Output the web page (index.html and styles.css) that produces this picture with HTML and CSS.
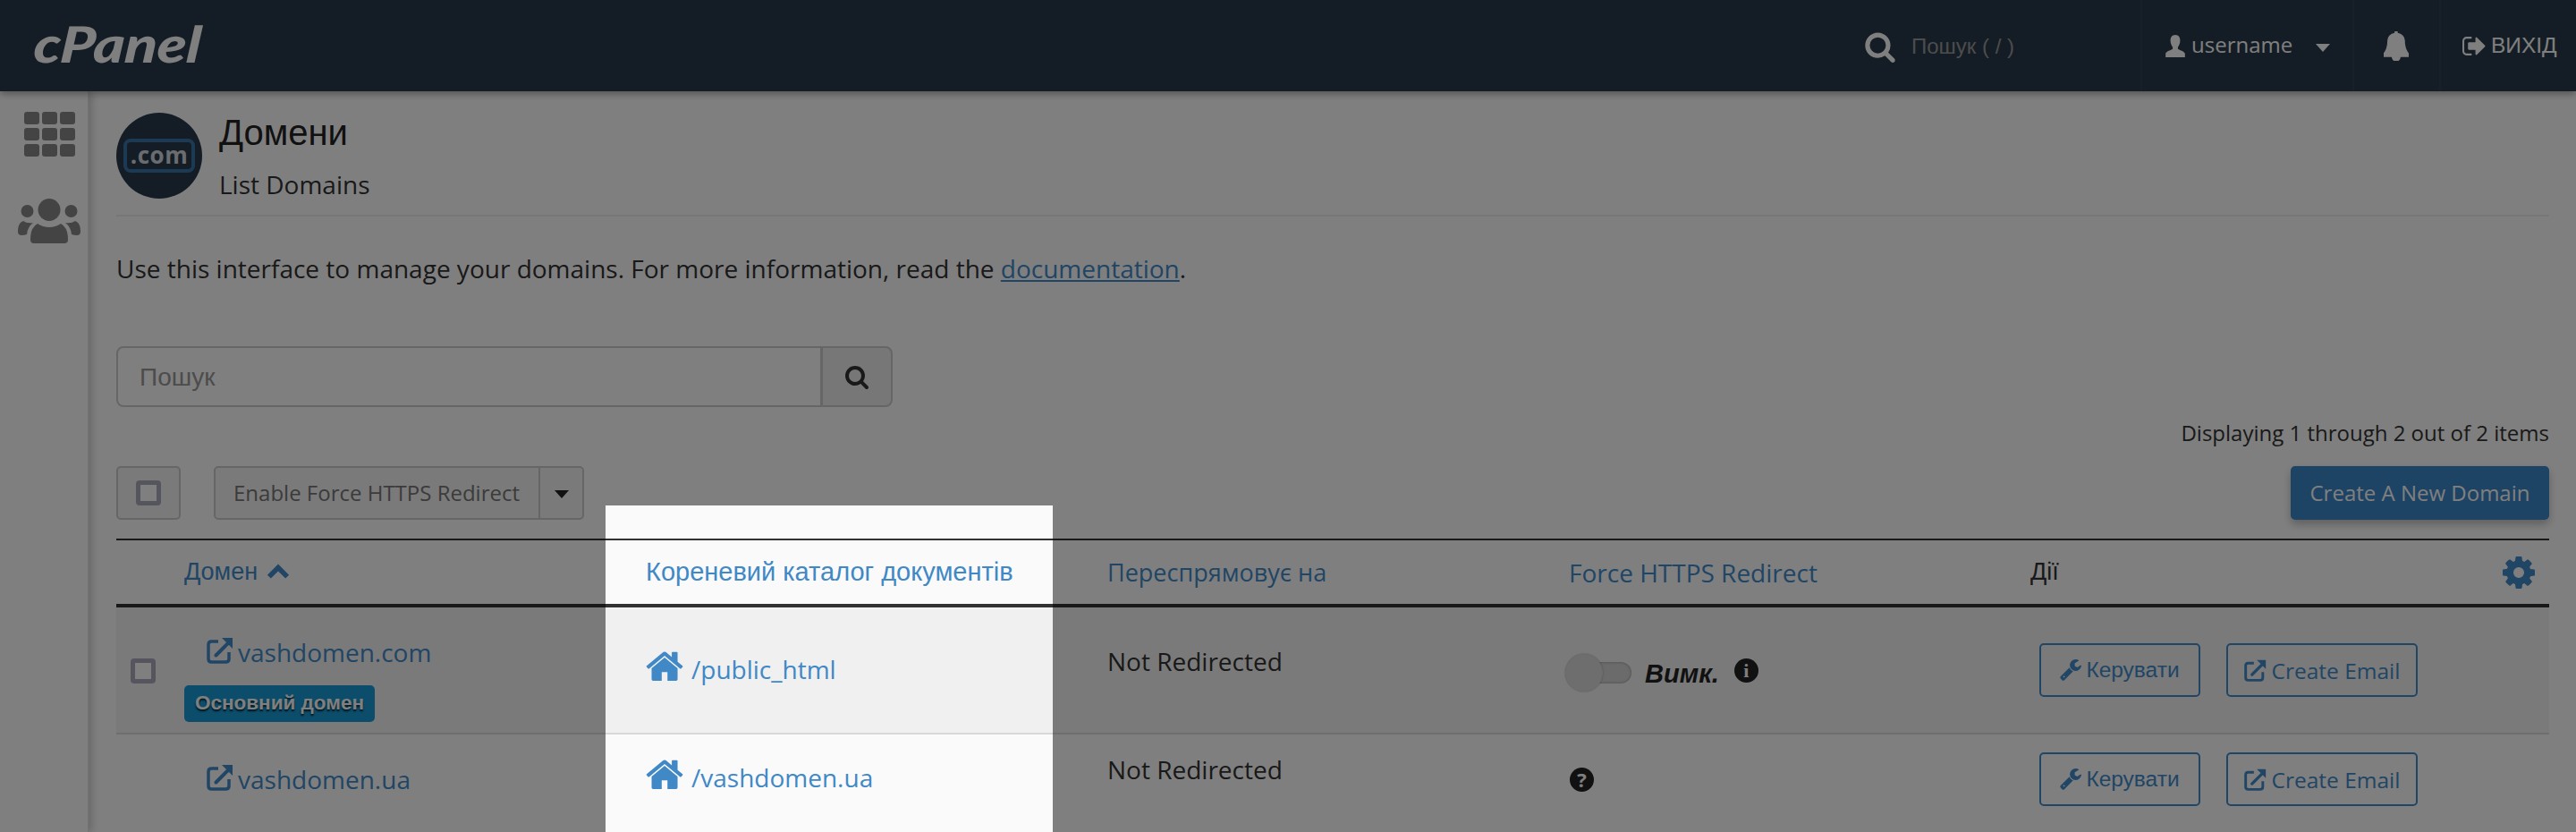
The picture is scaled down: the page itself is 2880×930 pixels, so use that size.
FILE: index.html
```html
<!DOCTYPE html>
<html lang="uk">
<head>
<meta charset="utf-8">
<title>Домени</title>
<link rel="stylesheet" href="styles.css">
</head>
<body>
<svg class="defs" width="0" height="0" aria-hidden="true">
  <symbol id="i-search" viewBox="0 0 1792 1792"><path d="M1216 832q0-185-131.500-316.500t-316.500-131.500-316.500 131.500-131.500 316.500 131.500 316.500 316.500 131.500 316.500-131.500 131.500-316.500zm512 832q0 52-38 90t-90 38q-54 0-90-38l-343-342q-179 124-399 124-143 0-273.500-55.500t-225-150-150-225-55.500-273.500 55.500-273.500 150-225 225-150 273.500-55.500 273.500 55.500 225 150 150 225 55.500 273.500q0 220-124 399l343 343q37 37 37 90z"/></symbol>
  <symbol id="i-bell" viewBox="200 40 1400 1720"><path d="M1728 1408q0 52-38 90t-90 38h-448q0 106-75 181t-181 75-181-75-75-181h-448q-52 0-90-38t-38-90q50-42 91-88t85-119.500 74.500-158.500 50-206 19.500-260q0-152 117-282.500t307-158.500q-8-19-8-39 0-40 28-68t68-28 68 28 28 68q0 20-8 39 190 28 307 158.500t117 282.500q0 139 19.500 260t50 206 74.500 158.500 85 119.500 91 88z"/></symbol>
  <symbol id="i-out" viewBox="64 256 1600 1280"><path d="M704 1440q0 4 1 20t.5 26.500-3 23.500-10 19.500-20.500 6.500h-320q-119 0-203.500-84.500t-84.500-203.500v-704q0-119 84.500-203.500t203.500-84.500h320q13 0 22.500 9.500t9.500 22.500q0 4 1 20t.5 26.500-3 23.500-10 19.500-20.500 6.500h-320q-66 0-113 47t-47 113v704q0 66 47 113t113 47h312l11.500 1 11.500 3 8 5.500 7 9 2 13.500zm928-544q0 26-19 45l-544 544q-19 19-45 19t-45-19-19-45v-288h-448q-26 0-45-19t-19-45v-384q0-26 19-45t45-19h448v-288q0-26 19-45t45-19 45 19l544 544q19 19 19 45z"/></symbol>
  <symbol id="i-users" viewBox="0 0 70 50">
    <circle cx="35" cy="12.500" r="12.500"/>
    <circle cx="10.500" cy="14" r="7"/>
    <circle cx="59.500" cy="14" r="7"/>
    <path d="M14 46Q14 32 22 28Q28 32 35 32Q42 32 48 28Q56 32 56 46Q56 50 52 50H18Q14 50 14 46z"/>
    <path d="M0 37Q0 27 6 25Q10 28 17 27Q11 31 10 40Q0 43 0 37z"/>
    <path d="M70 37Q70 27 64 25Q60 28 53 27Q59 31 60 40Q70 43 70 37z"/>
  </symbol>
  <symbol id="i-ext" viewBox="0 0 30 30">
    <path class="ext-box" d="M13 5H5.500Q2 5 2 8.500V24.500Q2 28 5.500 28H21.500Q25 28 25 24.500V17"/>
    <path class="ext-arrow" d="M10.500 20.500L24 7"/>
    <polygon points="17,1 29,1 29,13"/>
  </symbol>
  <symbol id="i-home" viewBox="90 190 1610 1350"><path d="M1472 992v480q0 26-19 45t-45 19h-384v-384h-256v384h-384q-26 0-45-19t-19-45v-480q0-1 .5-3t.5-3l575-474 575 474q1 2 1 6zm223-69l-62 74q-8 9-21 11h-3q-13 0-21-7l-692-577-692 577q-12 8-24 7-13-2-21-11l-62-74q-8-10-7-23.500t11-21.500l719-599q32-26 76-26t76 26l244 204v-195q0-14 9-23t23-9h192q14 0 23 9t9 23v408l219 182q10 8 11 21.500t-7 23.500z"/></symbol>
  <symbol id="i-wrench" viewBox="64 128 1664 1664"><path d="M448 1472q0-26-19-45t-45-19-45 19-19 45 19 45 45 19 45-19 19-45zm644-420l-682 682q-37 37-90 37-52 0-91-37l-106-108q-38-36-38-90 0-53 38-91l681-681q39 98 114.500 173.500t173.500 114.500zm634-435q0 39-23 106-47 134-164.500 217.500t-258.500 83.500q-185 0-316.500-131.500t-131.500-316.500 131.500-316.500 316.500-131.500q58 0 121.500 16.500t107.500 46.500q16 11 16 28t-16 28l-293 169v224l193 107q5-3 79-48.500t135.500-81 70.500-35.500q15 0 23.500 10t8.500 25z"/></symbol>
  <symbol id="i-cog" viewBox="128 128 1536 1536"><path d="M1152 896q0-106-75-181t-181-75-181 75-75 181 75 181 181 75 181-75 75-181zm512-109v222q0 12-8 23t-20 13l-185 28q-19 54-39 91 35 50 107 138 10 12 10 25t-9 23q-27 37-99 108t-94 71q-12 0-26-9l-138-108q-44 23-91 38-16 136-29 186-7 28-36 28h-222q-14 0-24.500-8.500t-11.500-21.500l-28-184q-49-16-90-37l-141 107q-10 9-25 9-14 0-25-11-126-114-165-168-7-10-7-23 0-12 8-23 15-21 51-66.500t54-70.500q-27-50-41-99l-183-27q-13-2-21-12.500t-8-23.500v-222q0-12 8-23t19-13l186-28q14-46 39-92-40-57-107-138-10-12-10-24 0-10 9-23 26-36 98.500-107.500t94.500-71.500q13 0 26 10l138 107q44-23 91-38 16-136 29-186 7-28 36-28h222q14 0 24.500 8.500t11.500 21.500l28 184q49 16 90 37l142-107q9-9 24-9 13 0 25 10 129 119 165 170 7 8 7 22 0 12-8 23-15 21-51 66.500t-54 70.500q26 50 41 98l183 28q13 2 21 12.500t8 23.500z"/></symbol>
</svg>

<header class="topbar">
  <span class="logo">cPanel</span>
  <div class="top-search">
    <svg class="ic ic-topsearch"><use href="#i-search"/></svg>
    <span class="top-placeholder">Пошук ( / )</span>
  </div>
  <div class="top-cell top-user">
    <svg class="ic ic-user" viewBox="0 0 26 30"><path d="M13 0c4.500 0 6.500 3.500 6.500 7.500 0 3.500-1.500 7-3 9v2.500c3 1.800 9.500 3.500 9.500 6.500V30H0v-4.500c0-3 6.500-4.700 9.500-6.500v-2.500c-1.500-2-3-5.500-3-9C6.500 3.500 8.500 0 13 0z"/></svg>
    <span class="top-name">username</span>
    <svg class="ic ic-topcaret" viewBox="0 0 16 9"><polygon points="0,0 16,0 8,9"/></svg>
  </div>
  <div class="top-cell top-bell"><svg class="ic ic-bell"><use href="#i-bell"/></svg></div>
  <div class="top-cell top-logout">
    <svg class="ic ic-out"><use href="#i-out"/></svg>
    <span class="top-exit">ВИХІД</span>
  </div>
</header>

<div class="shell">
  <nav class="rail">
    <div class="grid-icon">
      <i></i><i></i><i></i><i></i><i></i><i></i><i></i><i></i><i></i>
    </div>
    <svg class="ic ic-users"><use href="#i-users"/></svg>
  </nav>

  <main class="content">
    <section class="page-head">
      <div class="app-icon"><span class="app-icon-box">.com</span></div>
      <div class="page-titles">
        <h1 class="page-title">Домени</h1>
        <p class="page-sub">List Domains</p>
      </div>
    </section>

    <p class="intro">Use this interface to manage your domains. For more information, read the <a class="doc-link" href="#">documentation</a>.</p>

    <div class="search-group">
      <div class="search-input">Пошук</div>
      <div class="search-btn"><svg class="ic ic-btnsearch"><use href="#i-search"/></svg></div>
    </div>

    <div class="paging">Displaying 1 through 2 out of 2 items</div>

    <div class="toolbar">
      <div class="toolbar-left">
        <div class="check-btn"><span class="checkbox"></span></div>
        <div class="split">
          <span class="split-label">Enable Force HTTPS Redirect</span>
          <span class="split-caret"><svg class="ic ic-caret" viewBox="0 0 16 9"><polygon points="0,0 16,0 8,9"/></svg></span>
        </div>
      </div>
      <div class="primary-btn">Create A New Domain</div>
    </div>

    <table class="domains">
      <colgroup>
        <col class="c-check"><col class="c-std"><col class="c-std"><col class="c-std"><col class="c-std"><col class="c-act">
      </colgroup>
      <thead>
        <tr>
          <th class="th-check"></th>
          <th class="th-link cy">Домен <svg class="ic ic-chev" viewBox="0 0 24 16"><polyline points="3,13 12,4 21,13"/></svg></th>
          <th class="th-link2 cy">Кореневий каталог документів</th>
          <th class="th-link os">Переспрямовує на</th>
          <th class="th-link th-force os">Force HTTPS Redirect</th>
          <th class="th-plain">
            <div class="th-act"><span class="cy">Дії</span><svg class="ic ic-cog"><use href="#i-cog"/></svg></div>
          </th>
        </tr>
      </thead>
      <tbody>
        <tr class="row-a">
          <td class="td-check"><span class="checkbox"></span></td>
          <td class="td-domain">
            <a class="domain-link" href="#"><svg class="ic ic-ext"><use href="#i-ext"/></svg>vashdomen.com</a>
            <span class="badge">Основний домен</span>
          </td>
          <td class="td-root"><a class="root-link" href="#"><svg class="ic ic-home"><use href="#i-home"/></svg>/public_html</a></td>
          <td class="td-top">Not Redirected</td>
          <td class="td-force">
            <span class="toggle"><span class="toggle-track"></span><span class="toggle-knob"></span></span>
            <span class="off-label">Вимк.</span>
            <span class="round-badge round-i">i</span>
          </td>
          <td class="td-actions">
            <a class="outline-btn btn-manage" href="#"><svg class="ic ic-wrench"><use href="#i-wrench"/></svg>Керувати</a>
            <a class="outline-btn btn-mail" href="#"><svg class="ic ic-ext-sm"><use href="#i-ext"/></svg>Create Email</a>
          </td>
        </tr>
        <tr class="row-b">
          <td></td>
          <td class="td-domain td-domain-b">
            <a class="domain-link" href="#"><svg class="ic ic-ext"><use href="#i-ext"/></svg>vashdomen.ua</a>
          </td>
          <td class="td-root td-root-b"><a class="root-link" href="#"><svg class="ic ic-home"><use href="#i-home"/></svg>/vashdomen.ua</a></td>
          <td class="td-top">Not Redirected</td>
          <td class="td-force td-force-b"><span class="round-badge round-q">?</span></td>
          <td class="td-actions td-actions-b">
            <a class="outline-btn btn-manage" href="#"><svg class="ic ic-wrench"><use href="#i-wrench"/></svg>Керувати</a>
            <a class="outline-btn btn-mail" href="#"><svg class="ic ic-ext-sm"><use href="#i-ext"/></svg>Create Email</a>
          </td>
        </tr>
      </tbody>
    </table>
  </main>
</div>

<div class="spotlight"></div>
</body>
</html>
```

FILE: styles.css
```css
* { box-sizing: border-box; }
html, body { margin: 0; height: 930px; overflow: hidden; background: #fff; }
body { font-family: "Open Sans", sans-serif; font-size: 27px; color: #333; position: relative; }
a { text-decoration: none; }
.defs { position: absolute; }
.ic { fill: currentColor; display: inline-block; }
.cy { font-family: "Liberation Sans", sans-serif; }
.os { font-family: "Open Sans", sans-serif; }
.ext-box { fill: none; stroke: currentColor; stroke-width: 3.5; }
.ext-arrow { fill: none; stroke: currentColor; stroke-width: 4; stroke-linecap: round; }

/* top bar */
.topbar { height: 102px; background: #293a4a; display: flex; align-items: stretch; color: #fff; position: relative; z-index: 2; box-shadow: 0 3px 8px rgba(0,0,0,.35); }
.logo { font-family: "Lato", sans-serif; font-weight: 900; font-style: italic; font-size: 56px; line-height: 98px; margin-left: 38px; margin-right: auto; transform: scaleX(1.19) skewX(-4deg); transform-origin: left center; }
.top-search { display: flex; align-items: center; width: 309px; padding-top: 2px; }
.ic-topsearch { width: 36px; height: 36px; margin-right: 17px; }
.top-placeholder { font-family: "Liberation Sans", sans-serif; font-size: 24px; color: #999; }
.top-cell { display: flex; align-items: center; border-left: 2px solid #2f4152; }
.top-user { width: 237px; padding-left: 25px; }
.ic-user { width: 24px; height: 25px; margin-right: 6px; }
.top-name { font-size: 24px; width: 139px; line-height: 28px; margin-bottom: 2px; }
.ic-topcaret { width: 16px; height: 9px; margin-top: 4px; }
.top-bell { width: 97px; justify-content: center; }
.ic-bell { width: 28px; height: 33px; margin-right: 2px; }
.top-logout { flex: 0 0 153px; padding-left: 24px; }
.ic-out { width: 26px; height: 21px; margin-right: 6px; }
.top-exit { font-family: "Liberation Sans", sans-serif; font-size: 24.5px; }

/* shell */
.shell { display: flex; height: 828px; }
.rail { width: 99px; flex: none; display: flex; flex-direction: column; align-items: center; color: #888; padding: 23px 0 0 12px; box-shadow: 4px 0 8px rgba(0,0,0,.18); border-right: 1px solid #e6e6e6; position: relative; z-index: 1; }
.grid-icon { display: grid; grid-template-columns: repeat(3, 17px); grid-auto-rows: 14px; gap: 4px 3px; width: 57px; margin-bottom: 47px; }
.grid-icon i { background: #888; border-radius: 3px; }
.ic-users { width: 70px; height: 50px; }
.content { flex: 1; padding: 24px 30px 0 31px; min-width: 0; }

/* page head */
.page-head { display: flex; gap: 19px; height: 116px; border-bottom: 2px solid #eee; }
.app-icon { width: 96px; height: 96px; border-radius: 50%; background: #293a4a; display: flex; align-items: center; justify-content: center; }
.app-icon-box { border: 4px solid #3a75a8; border-radius: 8px; color: #d5dbe0; font-size: 26px; font-weight: 700; letter-spacing: .5px; line-height: 28px; height: 38px; width: 80px; text-align: center; white-space: nowrap; }
.page-title { font-family: "Liberation Sans", sans-serif; font-weight: 400; font-size: 40px; line-height: 44px; margin: 0; color: #222; }
.page-sub { font-size: 28px; line-height: 36px; margin: 18px 0 0; }
.intro { margin: 39px 0 0; line-height: 38px; font-size: 28px; }
.doc-link { color: #428bca; text-decoration: underline; }

/* search */
.search-group { display: flex; width: 868px; height: 68px; margin-top: 68px; }
.search-input { flex: 1; border: 2px solid #ccc; border-radius: 8px 0 0 8px; font-family: "Liberation Sans", sans-serif; font-size: 28px; color: #999; padding-left: 24px; line-height: 65px; }
.search-btn { width: 79px; border: 2px solid #ccc; border-left-width: 1px; border-radius: 0 8px 8px 0; background: #eee; display: flex; align-items: center; justify-content: center; color: #333; }
.ic-btnsearch { width: 28px; height: 28px; }
.paging { font-size: 24px; text-align: right; line-height: 30px; margin-top: 14px; }

/* toolbar */
.toolbar { display: flex; justify-content: space-between; margin-top: 22px; height: 60px; }
.toolbar-left { display: flex; gap: 37px; }
.check-btn { width: 72px; border: 2px solid #ccc; border-radius: 5px; background: #f5f5f5; display: flex; align-items: center; justify-content: center; }
.checkbox { display: block; width: 28px; height: 28px; border: 5px solid #aab; border-radius: 4px; background: #fff; }
.split { width: 414px; display: flex; border: 2px solid #ccc; border-radius: 5px; background: #f5f5f5; }
.split-label { width: 361px; font-size: 24px; color: #777; line-height: 56px; padding-left: 20px; white-space: nowrap; }
.split-caret { flex: 1; border-left: 2px solid #ccc; display: flex; align-items: center; justify-content: center; color: #222; }
.ic-caret { width: 16px; height: 9px; margin-top: 2px; }
.primary-btn { width: 289px; background: #3a86ca; color: #fff; border-radius: 5px; font-size: 24px; line-height: 60px; text-align: center; white-space: nowrap; box-shadow: 0 5px 10px rgba(0,0,0,.25); }

/* table */
.domains { width: 2720px; table-layout: fixed; border-collapse: separate; border-spacing: 0; margin-top: 21px; }
.c-check { width: 60px; }
.c-std { width: 516px; }
.c-act { width: 596px; }
.domains th { height: 77px; padding: 0 16px; text-align: left; font-weight: 400; font-size: 27px; border-top: 2px solid #333; border-bottom: 4px solid #333; white-space: nowrap; }
.th-link, .th-link2 { color: #428bca; }
.domains .th-link2 { font-size: 29px; }
.domains .th-force { font-size: 28px; }
.th-act { display: flex; justify-content: space-between; align-items: center; padding-left: 0; }
.ic-chev { width: 28px; height: 18px; fill: none; stroke: #428bca; stroke-width: 5; margin-left: 1px; }
.ic-cog { width: 36px; height: 36px; color: #428bca; margin-right: 0; }
.row-a td { background: #f5f5f5; height: 142px; border-bottom: 2px solid #ddd; }
.row-b td { height: 122px; }
.domains td { padding: 0 16px; vertical-align: top; }
.domains .td-check { padding: 57px 0 0 16px; }
.td-domain { padding-top: 30px !important; }
.domain-link { color: #428bca; font-size: 28px; line-height: 40px; display: block; margin-left: 25px; white-space: nowrap; }
.ic-ext { width: 30px; height: 30px; margin: 0 5px 0 0; vertical-align: -2px; }
.badge { display: inline-block; margin-top: 17px; height: 41px; line-height: 40px; width: 213px; text-align: center; background: #179bd7; color: #fff; font-family: "Liberation Sans", sans-serif; font-weight: 700; font-size: 22.5px; border-radius: 5px; text-shadow: 0 2px 2px rgba(0,0,0,.8); white-space: nowrap; }
.td-domain-b { padding-top: 30px !important; }
.td-root { padding-top: 48px !important; }
.td-root-b { padding-top: 27px !important; }
.root-link { color: #428bca; font-size: 28px; line-height: 40px; white-space: nowrap; display: block; }
.ic-home { width: 42px; height: 34px; margin-right: 9px; vertical-align: -2px; }
.td-top { padding-top: 40px !important; font-size: 28px; line-height: 40px; white-space: nowrap; }
.row-b .td-top { padding-top: 19px !important; }
.td-force { padding: 52px 0 0 12px !important; white-space: nowrap; }
.toggle { display: inline-block; position: relative; width: 74px; height: 42px; vertical-align: top; }
.toggle-track { position: absolute; left: 20px; right: 0; top: 9px; height: 24px; background: #d6d6d6; border-radius: 0 12px 12px 0; box-shadow: inset 0 0 3px rgba(0,0,0,.35); }
.toggle-knob { position: absolute; left: 0; top: 0; width: 42px; height: 42px; border-radius: 50%; background: #dcdcdc; box-shadow: 0 0 2px rgba(0,0,0,.35); }
.off-label { font-family: "Liberation Sans", sans-serif; font-weight: 700; font-style: italic; font-size: 29px; line-height: 44px; margin-left: 8px; vertical-align: top; color: #222; }
.round-badge { display: inline-block; width: 27px; height: 27px; border-radius: 50%; background: #222; color: #fff; font-weight: 700; text-align: center; font-size: 20px; line-height: 27px; vertical-align: top; }
.round-i { font-family: "Liberation Serif", serif; font-size: 22px; margin: 5px 0 0 10px; }
.round-q { font-family: "Open Sans", sans-serif; font-size: 22px; }
.td-force-b { padding-top: 37px !important; }
.td-force-b .round-badge { margin-left: 5px; }
.td-actions { padding-top: 40px !important; padding-left: 26px !important; white-space: nowrap; }
.td-actions-b { padding-top: 20px !important; }
.outline-btn { display: inline-flex; align-items: center; justify-content: center; height: 60px; border: 2px solid #428bca; border-radius: 5px; color: #428bca; font-size: 24.5px; vertical-align: top; white-space: nowrap; }
.btn-manage { width: 180px; font-family: "Liberation Sans", sans-serif; margin-right: 22px; }
.btn-mail { width: 214px; }
.ic-wrench { width: 24px; height: 24px; margin-right: 5px; }
.ic-ext-sm { width: 25px; height: 25px; margin-right: 6px; }

/* tour spotlight dimming everything but one column */
.spotlight { position: absolute; left: 677px; top: 565px; width: 500px; height: 400px; background: rgba(0,0,0,.02); box-shadow: 0 0 0 3000px rgba(0,0,0,.5); z-index: 5; pointer-events: none; }
```
